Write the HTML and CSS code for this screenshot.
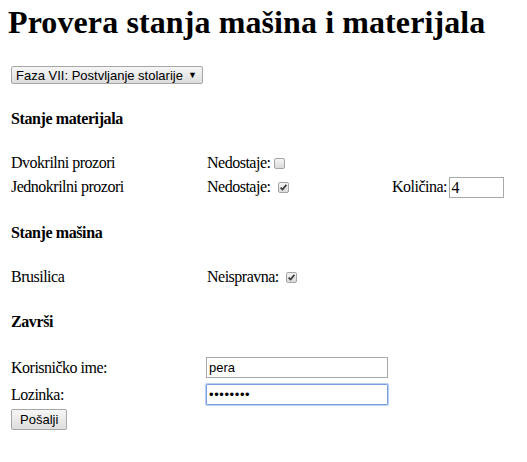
FILE: index.html
```html
<!DOCTYPE html>
<html>
<head>
<meta charset="utf-8">
<link rel="stylesheet" href="styles.css">
</head>
<body>
<h1 class="title">Provera stanja mašina i materijala</h1>
<div class="phase">
  <div class="select"><span>Faza VII: Postvljanje stolarije</span><span class="arrow">▼</span></div>
</div>
<h4 class="section">Stanje materijala</h4>
<div class="grid">
  <div class="row">
    <span class="c1">Dvokrilni prozori</span>
    <span class="c2">Nedostaje:<span class="cb"></span></span>
  </div>
  <div class="row tall">
    <span class="c1">Jednokrilni prozori</span>
    <span class="c2">Nedostaje: <span class="cb"><svg viewBox="0 0 11 11" width="11" height="11"><path d="M2.6 5.6 L4.6 7.6 L8.4 2.9" fill="none" stroke="#3a3a3a" stroke-width="1.7"/></svg></span></span>
    <span class="c3">Količina: <span class="text qty">4</span></span>
  </div>
</div>
<h4 class="section s2">Stanje mašina</h4>
<div class="grid">
  <div class="row">
    <span class="c1">Brusilica</span>
    <span class="c2">Neispravna: <span class="cb"><svg viewBox="0 0 11 11" width="11" height="11"><path d="M2.6 5.6 L4.6 7.6 L8.4 2.9" fill="none" stroke="#3a3a3a" stroke-width="1.7"/></svg></span></span>
  </div>
</div>
<h4 class="section">Završi</h4>
<div class="grid g3">
  <div class="row login-row">
    <span class="c1">Korisničko ime:</span>
    <span class="c2"><span class="text login">pera</span></span>
  </div>
  <div class="row login-row">
    <span class="c1">Lozinka:</span>
    <span class="c2"><span class="text login focus">••••••••</span></span>
  </div>
</div>
<div class="actions"><span class="button">Pošalji</span></div>
</body>
</html>
```
FILE: styles.css
```css
html, body {
  margin: 0;
  padding: 0;
  background: #fff;
  color: #000;
}
body {
  padding: 0 8px;
  font-family: "Liberation Serif", serif;
  font-size: 16px;
}
.title {
  margin: 0;
  padding-top: 2px;
  font-size: 32px;
  font-weight: bold;
  line-height: 40px;
  letter-spacing: 0.1px;
  white-space: nowrap;
}
.phase {
  display: flex;
  margin-top: 24px;
  padding-left: 3px;
}
.select {
  display: flex;
  align-items: center;
  box-sizing: border-box;
  width: 192px;
  height: 18px;
  border: 1px solid #a6a6a6;
  border-radius: 2px;
  background: linear-gradient(#f6f6f6, #dddddd);
  font-family: "Liberation Sans", sans-serif;
  font-size: 13px;
  padding: 0 5px 0 4px;
  white-space: nowrap;
}
.arrow {
  margin-left: auto;
  font-size: 9px;
}
.section {
  margin: 26px 0 0;
  padding-left: 3px;
  line-height: 18px;
  font-size: 16px;
  font-weight: bold;
  letter-spacing: -0.4px;
}
.section.s2 {
  margin-top: 25px;
}
.grid {
  display: flex;
  flex-direction: column;
  gap: 2px;
  margin-top: 25px;
  padding-left: 3px;
  letter-spacing: -0.5px;
}
.grid.g3 {
  margin-top: 24px;
}
.row {
  display: grid;
  grid-template-columns: 196px 185px auto;
  align-items: center;
  height: 20px;
  line-height: 20px;
}
.row.tall {
  height: 24px;
}
.row.login-row {
  height: 25px;
}
.c2, .c3 {
  display: flex;
  align-items: center;
  white-space: pre;
}
.cb {
  display: inline-block;
  box-sizing: border-box;
  width: 11px;
  height: 11px;
  margin-left: 4px;
  border: 1px solid #a4a4a4;
  border-radius: 2px;
  background: linear-gradient(#f5f5f5, #dadada);
}
.cb svg {
  display: block;
  margin: -1px;
}
.text {
  display: inline-block;
  box-sizing: border-box;
  height: 21px;
  border: 1px solid #a9a9a9;
  font-family: "Liberation Sans", sans-serif;
  font-size: 13px;
  line-height: 19px;
  padding-left: 2px;
  letter-spacing: 0;
}
.qty {
  width: 55px;
  margin-left: -2px;
  font-family: "Liberation Serif", serif;
  font-size: 16px;
}
.login {
  width: 182px;
  margin-left: -1px;
}
.focus {
  border-color: #7a9fe0;
  box-shadow: 0 0 1px 1px #b3cbf3;
  border-radius: 1px;
  letter-spacing: 0.6px;
}
.actions {
  margin-top: 2px;
  padding-left: 3px;
  display: flex;
}
.button {
  display: inline-block;
  box-sizing: border-box;
  height: 21px;
  padding: 0 8px;
  border: 1px solid #a6a6a6;
  border-radius: 2px;
  background: linear-gradient(#f6f6f6, #dddddd);
  font-family: "Liberation Sans", sans-serif;
  font-size: 13px;
  line-height: 19px;
}
```
